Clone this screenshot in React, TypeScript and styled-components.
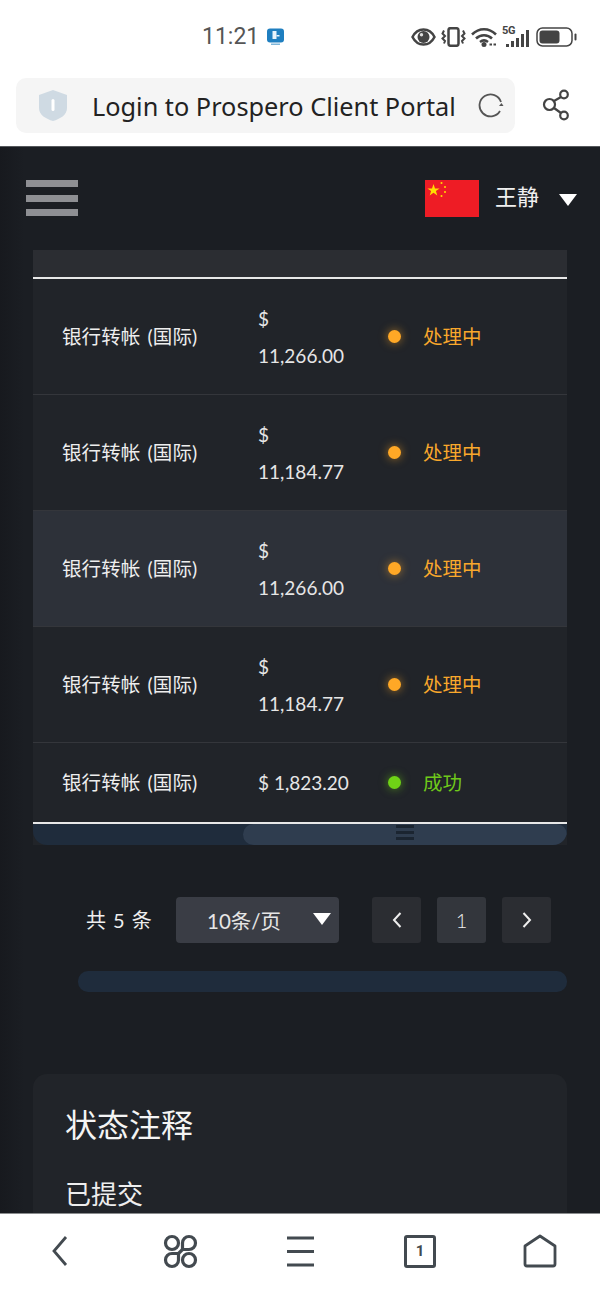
import styled, { createGlobalStyle } from "styled-components";

const FONT = `"Lato", "Noto Sans CJK SC", sans-serif`;

const GlobalStyle = createGlobalStyle`
  html, body {
    margin: 0;
    padding: 0;
    background: #fff;
  }
  #root {
    height: 100vh;
  }
  * {
    box-sizing: border-box;
  }
`;

type Row = {
  amount: string;
  status: "pending" | "success";
  hover?: boolean;
};

const rows: Row[] = [
  { amount: "$ 11,266.00", status: "pending" },
  { amount: "$ 11,184.77", status: "pending" },
  { amount: "$ 11,266.00", status: "pending", hover: true },
  { amount: "$ 11,184.77", status: "pending" },
  { amount: "$ 1,823.20", status: "success" },
];

const statusColor = { pending: "#f9a82c", success: "#6fc81a" };
const dotColor = { pending: "#ffa826", success: "#6fd316" };
const statusText = { pending: "处理中", success: "成功" };

export default function App() {
  return (
    <Page>
      <GlobalStyle />
      <StatusBar>
        <Clock>
          <Time>11:21</Time>
          <svg width="19" height="18" viewBox="0 0 19 18">
            <rect x="1" y="0.5" width="17" height="14" rx="3" fill="#1f7fc0" />
            <rect x="6.500" y="3" width="4" height="8" fill="#e8f4fb" />
            <rect x="10.500" y="7" width="3" height="1.500" fill="#e8f4fb" />
            <rect x="5" y="15.500" width="9" height="1.500" fill="#7fb6d9" />
          </svg>
        </Clock>
        <StatusIcons>
          <svg width="25" height="18" viewBox="0 0 25 18">
            <path d="M1.500 9C4 4 8 1.500 12.500 1.500S21 4 23.500 9c-2.500 5-6.500 7.500-11 7.500S4 14 1.500 9Z" fill="none" stroke="#444" strokeWidth="2.500" />
            <circle cx="12.500" cy="9" r="6" fill="#444" />
            <circle cx="10.500" cy="6.800" r="1.700" fill="#ddd" />
          </svg>
          <svg width="25" height="20" viewBox="0 0 25 20">
            <rect x="7.500" y="1.200" width="10" height="17.600" rx="2" fill="none" stroke="#444" strokeWidth="2.500" />
            <path d="M3 3.500 1.500 6.500 4 9 1.500 11.500 4 14 3 16.500M22 3.500l1.500 3L21 9l2.500 2.500L21 14l1 2.500" fill="none" stroke="#444" strokeWidth="2" />
          </svg>
          <svg width="26" height="20" viewBox="0 0 26 20">
            <path d="M1 7.500c7-7 17-7 24 0M5 11.500c4.500-4.500 11.500-4.500 16 0M9 15c2.500-2 5.500-2 8 0" fill="none" stroke="#444" strokeWidth="2.500" />
            <circle cx="13" cy="17.500" r="2.500" fill="#444" />
            <path d="M18.500 17.500h2.500M22.500 17.500h2.500" stroke="#444" strokeWidth="2" />
          </svg>
          <Signal>
            <NetLabel>5G</NetLabel>
            <svg width="27" height="20" viewBox="0 0 27 20">
              <path d="M5.500 20v-3M10.500 20v-6M15.500 20v-9M20.500 20V7M25.500 20V3" stroke="#444" strokeWidth="3" fill="none" />
            </svg>
          </Signal>
          <svg width="41" height="20" viewBox="0 0 41 20">
            <rect x="1" y="1" width="35" height="18" rx="5.500" fill="none" stroke="#444" strokeWidth="1.500" />
            <rect x="3.500" y="3.500" width="20" height="13" rx="3" fill="#444" />
            <rect x="38.500" y="6.500" width="2" height="7" rx="1" fill="#444" />
          </svg>
        </StatusIcons>
      </StatusBar>

      <BrowserBar>
        <UrlBox>
          <svg width="30" height="33" viewBox="0 0 30 33">
            <path d="M15 1 29 6v13c0 7-7 11-14 13C8 30 1 26 1 19V6Z" fill="#cfdae3" />
            <rect x="13.500" y="10" width="3" height="12" rx="1.500" fill="#fff" />
          </svg>
          <UrlText>Login to Prospero Client Portal</UrlText>
          <svg width="26" height="26" viewBox="0 0 26 26">
            <path d="M22 18A11 11 0 1 1 23 9" fill="none" stroke="#555" strokeWidth="1.800" />
            <path d="M21 13h4.500l-2 -3z" fill="#555" />
          </svg>
        </UrlBox>
        <ShareButton>
          <svg width="28" height="32" viewBox="0 0 28 32">
            <circle cx="7.500" cy="15.500" r="5.500" fill="none" stroke="#444" strokeWidth="2.200" />
            <circle cx="22" cy="5.500" r="3.800" fill="none" stroke="#444" strokeWidth="2.200" />
            <circle cx="22" cy="26.500" r="3.800" fill="none" stroke="#444" strokeWidth="2.200" />
            <path d="m12 12 7-4M12 19l7 5" stroke="#444" strokeWidth="2.200" />
          </svg>
        </ShareButton>
      </BrowserBar>

      <Main>
        <Header>
          <Burger>
            <BurgerLine />
            <BurgerLine />
            <BurgerLine />
          </Burger>
          <UserBox>
            <svg width="54" height="37" viewBox="0 0 54 37">
              <rect width="54" height="37" fill="#ee1c25" />
              <path d="M8.500 4l1.500 4.400h4.600l-3.700 2.700 1.400 4.400-3.800-2.700-3.800 2.700 1.400-4.400L2.400 8.400H7Z" fill="#ffde00" />
              <circle cx="16.500" cy="3" r="1" fill="#ffde00" />
              <circle cx="20" cy="7" r="1" fill="#ffde00" />
              <circle cx="20" cy="12" r="1" fill="#ffde00" />
              <circle cx="16.500" cy="16" r="1" fill="#ffde00" />
            </svg>
            <UserName>王静</UserName>
            <Caret />
          </UserBox>
        </Header>

        <TableWrap>
          <TableHead />
          {rows.map((row, idx) => (
            <TableRow key={idx} $hover={row.hover} $short={row.status === "success"}>
              <NameCell>银行转帐 (国际)</NameCell>
              <AmountCell>{row.amount}</AmountCell>
              <StatusCell>
                <Dot $color={dotColor[row.status]} />
                <StatusLabel $color={statusColor[row.status]}>{statusText[row.status]}</StatusLabel>
              </StatusCell>
            </TableRow>
          ))}
          <ScrollTrack>
            <ScrollThumb>
              <Grip>
                <GripLine />
                <GripLine />
                <GripLine />
              </Grip>
            </ScrollThumb>
          </ScrollTrack>
        </TableWrap>

        <Pager>
          <Total>共 5 条</Total>
          <PageSize>
            <span>10条/页</span>
            <SelectCaret />
          </PageSize>
          <PageButtons>
            <PageBtn>
              <svg width="12" height="18" viewBox="0 0 12 18">
                <path d="M9.500 2 3 9l6.500 7" fill="none" stroke="#eee" strokeWidth="2" />
              </svg>
            </PageBtn>
            <PageBtn $active>1</PageBtn>
            <PageBtn>
              <svg width="12" height="18" viewBox="0 0 12 18">
                <path d="M2.500 2 9 9l-6.500 7" fill="none" stroke="#eee" strokeWidth="2" />
              </svg>
            </PageBtn>
          </PageButtons>
        </Pager>

        <PagerScroll />

        <NoteCard>
          <NoteTitle>状态注释</NoteTitle>
          <NoteItem>已提交</NoteItem>
        </NoteCard>
      </Main>

      <BottomBar>
        <NavItem>
          <svg width="18" height="32" viewBox="0 0 18 32">
            <path d="M15 2 3 16l12 14" fill="none" stroke="#434a50" strokeWidth="2.800" />
          </svg>
        </NavItem>
        <NavItem>
          <svg width="35" height="35" viewBox="0 0 35 35" fill="none" stroke="#434a50" strokeWidth="3.200">
            <circle cx="9" cy="9" r="6.500" />
            <circle cx="26" cy="26" r="6.500" />
            <path d="M19.500 9A6.500 6.500 0 1 1 26 15.500H19.500Z" />
            <path d="M15.500 26A6.500 6.500 0 1 1 9 19.500H15.500Z" />
            <path d="M19.500 15.500 15.500 19.500" />
          </svg>
        </NavItem>
        <NavItem>
          <svg width="27" height="31" viewBox="0 0 27 31">
            <path d="M0 2h27M0 15.500h27M0 29h27" stroke="#434a50" strokeWidth="3" />
          </svg>
        </NavItem>
        <NavItem>
          <TabBox>1</TabBox>
        </NavItem>
        <NavItem>
          <svg width="34" height="34" viewBox="0 0 34 34">
            <path d="M17 2 32 12v18a2 2 0 0 1-2 2H4a2 2 0 0 1-2-2V12Z" fill="none" stroke="#434a50" strokeWidth="2.800" strokeLinejoin="round" />
          </svg>
        </NavItem>
      </BottomBar>
    </Page>
  );
}

const Page = styled.div`
  height: 100vh;
  display: flex;
  flex-direction: column;
  background: #fff;
  font-family: ${FONT};
  overflow: hidden;
`;

const StatusBar = styled.div`
  height: 73px;
  flex: none;
  display: flex;
  align-items: center;
  justify-content: space-between;
  padding: 0 23px 0 202px;
`;

const Clock = styled.div`
  display: flex;
  align-items: center;
  gap: 7px;
`;

const Time = styled.span`
  font-family: "Roboto", sans-serif;
  font-size: 23px;
  color: #555;
`;

const StatusIcons = styled.div`
  display: flex;
  align-items: center;
  gap: 5px;
`;

const Signal = styled.div`
  position: relative;
  width: 27px;
  height: 20px;
  margin-right: 2px;
`;

const NetLabel = styled.span`
  position: absolute;
  left: 0;
  top: -3px;
  font-family: "Roboto", sans-serif;
  font-size: 11px;
  font-weight: 700;
  letter-spacing: -0.3px;
  color: #444;
`;

const BrowserBar = styled.div`
  height: 73px;
  flex: none;
  display: flex;
  align-items: flex-start;
  padding: 5px 0 0 16px;
`;

const UrlBox = styled.div`
  width: 499px;
  height: 55px;
  display: flex;
  align-items: center;
  padding: 0 11px 0 22px;
  border-radius: 10px;
  background: #f5f5f5;
`;

const UrlText = styled.div`
  flex: 1;
  padding: 1px 0 0 24px;
  font-family: "Noto Sans", sans-serif;
  font-size: 25.300px;
  color: #222;
  white-space: nowrap;
`;

const ShareButton = styled.div`
  flex: 1;
  height: 54px;
  display: flex;
  align-items: center;
  justify-content: center;
  padding-right: 3px;
`;

const Main = styled.div`
  flex: 1;
  min-height: 0;
  overflow: hidden;
  border-top: 1px solid #55585c;
  background: linear-gradient(90deg, #17191e 0, #1b1e23 24px);
`;

const Header = styled.div`
  height: 103px;
  display: flex;
  align-items: flex-start;
  justify-content: space-between;
  padding: 33px 23px 0 26px;
`;

const Burger = styled.div`
  width: 52px;
  height: 36px;
  display: flex;
  flex-direction: column;
  justify-content: space-between;
`;

const BurgerLine = styled.div`
  height: 7px;
  background: #8e8f93;
`;

const UserBox = styled.div`
  display: flex;
  align-items: center;
  height: 37px;
`;

const UserName = styled.div`
  margin: 0 0 7px 16px;
  font-size: 22px;
  color: #f0f0f0;
`;

const Caret = styled.div`
  margin-left: 20px;
  margin-top: 3px;
  width: 0;
  height: 0;
  border-left: 9px solid transparent;
  border-right: 9px solid transparent;
  border-top: 12px solid #fff;
`;

const TableWrap = styled.div`
  margin: 0 33px;
  background: #212429;
`;

const TableHead = styled.div`
  height: 29px;
  background: #2b2d32;
  border-bottom: 2px solid #e8e8e8;
`;

const TableRow = styled.div<{ $hover?: boolean; $short?: boolean }>`
  height: ${(p) => (p.$short ? "79px" : "116px")};
  display: flex;
  align-items: center;
  padding-left: 29px;
  background: ${(p) => (p.$hover ? "#2d3139" : "#212429")};
  border-bottom: ${(p) => (p.$short ? "none" : "1px solid #34363b")};
`;

const NameCell = styled.div`
  width: 196px;
  padding-bottom: 2px;
  font-size: 19.500px;
  word-spacing: 2px;
  letter-spacing: 0.1px;
  color: #eee;
  white-space: nowrap;
`;

const AmountCell = styled.div`
  width: 95px;
  font-size: 19px;
  line-height: 37px;
  color: #e6e6e6;
`;

const StatusCell = styled.div`
  margin-left: 35px;
  display: flex;
  align-items: center;
  gap: 22px;
`;

const Dot = styled.div<{ $color: string }>`
  width: 13px;
  height: 13px;
  border-radius: 50%;
  background: ${(p) => p.$color};
  box-shadow: 0 0 10px ${(p) => p.$color}99;
`;

const StatusLabel = styled.div<{ $color: string }>`
  padding-bottom: 2px;
  font-size: 19.500px;
  color: ${(p) => p.$color};
`;

const ScrollTrack = styled.div`
  height: 23px;
  display: flex;
  justify-content: flex-end;
  border-top: 2px solid #e8e8e8;
  border-radius: 0 0 14px 14px;
  background: #1f2c3c;
  overflow: hidden;
`;

const ScrollThumb = styled.div`
  width: 324px;
  display: flex;
  justify-content: center;
  border-radius: 12px;
  background: #2f3d4f;
`;

const Grip = styled.div`
  width: 18px;
  padding: 1px 0;
  display: flex;
  flex-direction: column;
  gap: 3px;
  align-items: stretch;
`;

const GripLine = styled.div`
  height: 3px;
  background: #1b2531;
`;

const Pager = styled.div`
  margin-top: 52px;
  height: 46px;
  display: flex;
  align-items: center;
  padding-left: 86px;
`;

const Total = styled.div`
  width: 90px;
  padding-bottom: 2px;
  font-size: 20px;
  word-spacing: 2px;
  color: #eee;
  white-space: nowrap;
`;

const PageSize = styled.div`
  width: 163px;
  height: 46px;
  display: flex;
  align-items: center;
  justify-content: space-between;
  padding: 0 8px 0 31px;
  border-radius: 4px;
  background: #3a3d45;
  font-size: 20.500px;
  color: #e6e6e6;
`;

const SelectCaret = styled.div`
  width: 0;
  height: 0;
  border-left: 9px solid transparent;
  border-right: 9px solid transparent;
  border-top: 12px solid #fff;
  margin-top: -2px;
`;

const PageButtons = styled.div`
  margin-left: 33px;
  display: flex;
  gap: 16px;
`;

const PageBtn = styled.div<{ $active?: boolean }>`
  width: 49px;
  height: 46px;
  display: flex;
  align-items: center;
  justify-content: center;
  border-radius: 3px;
  background: ${(p) => (p.$active ? "#33363c" : "#2b2d32")};
  font-size: 20px;
  font-weight: 300;
  color: #eee;
`;

const PagerScroll = styled.div`
  height: 21px;
  margin: 28px 33px 0 78px;
  border-radius: 10px;
  background: #1f2c3c;
`;

const NoteCard = styled.div`
  margin: 82px 33px 0;
  padding: 28px 32px;
  border-radius: 14px;
  background: #212429;
`;

const NoteTitle = styled.div`
  font-size: 32px;
  line-height: 46px;
  color: #f4f4f4;
`;

const NoteItem = styled.div`
  margin-top: 28px;
  font-size: 26px;
  line-height: 36px;
  color: #eee;
`;

const BottomBar = styled.div`
  height: 78px;
  flex: none;
  display: grid;
  grid-template-columns: repeat(5, 1fr);
  padding-bottom: 3px;
  border-top: 1px solid #8a8c8e;
  background: #fff;
`;

const NavItem = styled.div`
  display: flex;
  align-items: center;
  justify-content: center;
`;

const TabBox = styled.div`
  width: 32px;
  height: 33px;
  display: flex;
  align-items: center;
  justify-content: center;
  border: 3px solid #434a50;
  border-radius: 3px;
  font-family: "Roboto", sans-serif;
  font-size: 15px;
  font-weight: 700;
  color: #434a50;
`;
